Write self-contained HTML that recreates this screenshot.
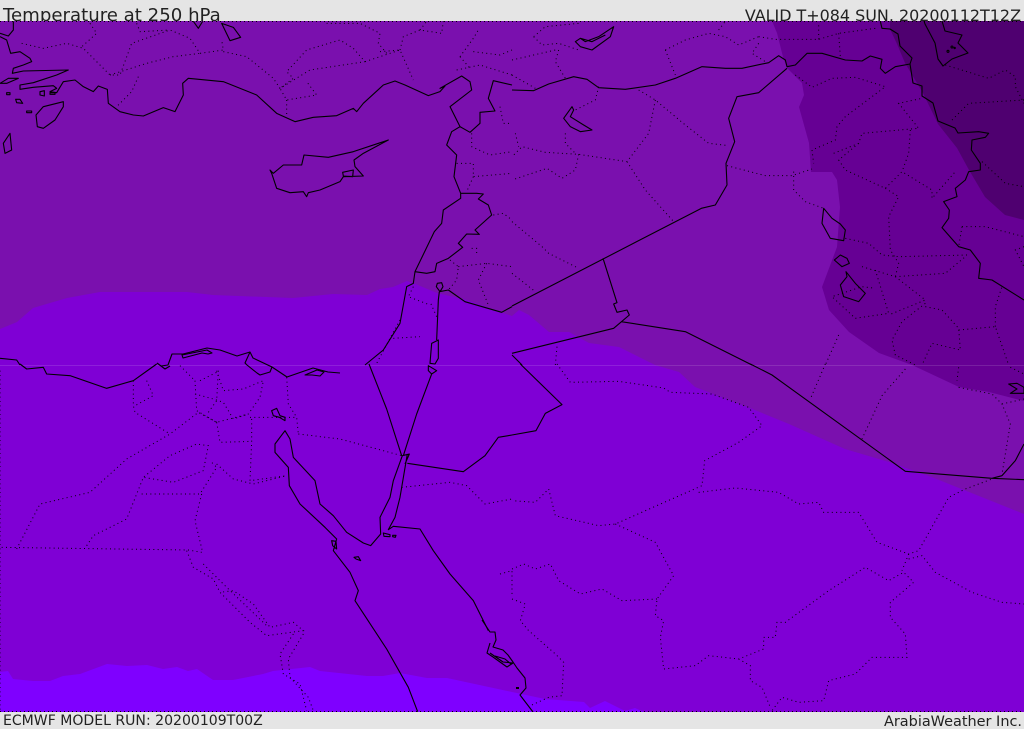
<!DOCTYPE html>
<html><head><meta charset="utf-8"><style>
html,body{margin:0;padding:0;background:#e5e5e5;width:1024px;height:729px;overflow:hidden}
svg{position:absolute;left:0;top:0;display:block}
text{font-family:"DejaVu Sans",sans-serif;fill:#222}
.c{fill:none;stroke:#000;stroke-width:3.3;stroke-linejoin:round}
.d{fill:none;stroke:#000;stroke-width:3;stroke-dasharray:3 10}
.a{fill:none;stroke:#000;stroke-width:1.1;stroke-linejoin:round}
</style></head><body>
<svg width="1024" height="729" viewBox="0 0 1024 729">
<rect width="1024" height="729" fill="#e5e5e5"/>
<text x="3" y="21" font-size="18.15">Temperature at 250 hPa</text>
<text x="1021" y="21" font-size="15.95" text-anchor="end">VALID T+084 SUN, 20200112T12Z</text>
<text x="3" y="725" font-size="14.06">ECMWF MODEL RUN: 20200109T00Z</text>
<text x="1022" y="726" font-size="14.45" text-anchor="end">ArabiaWeather Inc.</text>
<svg x="0" y="21" width="1024" height="691" viewBox="0 21 1024 691">
<rect x="0" y="21" width="1024" height="691" fill="#7a10ae"/>
<path fill="#7f00d5" d="M0,329 17,322 33,308 67,298 100,292 187,292 213,295 293,298 333,294 367,295 380,289 393,287 407,281 413,283 437,293 467,300 500,312 512,316 519,310 529,315 549,332 569,332 589,343 619,347 655,365 679,372 695,387 745,406 789,424 845,449 889,462 929,476 1024,514 1024,712 0,712Z"/>
<path fill="#7f00ff" d="M0,672 8,671 13,679 33,681 50,681 63,676 80,674 107,664 127,666 147,665 163,669 177,667 188,671 197,669 213,680 233,680 263,674 273,671 310,667 320,671 367,676 383,676 400,673 427,678 447,678 512,692 545,699 584,702 590,708 605,701 625,711 635,708 644,712 0,712Z"/>
<path fill="#660094" d="M772,21 777,33 783,57 787,68 802,83 804,95 799,107 809,143 811,172 832,172 837,180 840,207 837,247 822,287 829,310 849,332 879,353 912,365 959,387 989,392 1024,401 1024,21Z"/>
<path fill="#4f0070" d="M890,21 890,29 897,44 905,63 923,93 938,124 957,148 969,170 985,197 1005,215 1024,220 1024,21Z"/>
<rect x="0" y="365" width="1024" height="1" fill="#fff" opacity=".12"/>
<g transform="scale(.33333)">
<path class="d" d="M65,130 130,145 200,130 250,145 330,225 360,225 395,130 510,90 570,115 600,160 670,150 665,120M270,70 290,100 240,145M410,70 420,95 510,90M330,225 440,190 520,170 600,160M415,230 395,275 350,320M670,155 740,170 820,235 840,265 930,210 1095,185 1060,145 1020,120 920,150 860,215 880,235 840,265 860,300 950,285 920,245M860,300 860,350M1095,185 1200,150 1240,240M1200,150 1210,110 1260,90 1325,100 1330,64M1160,160 1135,130 1140,100 1080,70 980,70M1140,155 1200,150M1260,90 1280,64M1370,210 1440,195 1536,225M1380,170 1420,115 1435,90M1420,155 1500,165 1536,150M1380,170 1410,205M1415,400 1415,440 1470,465 1536,455M1370,490 1420,490 1420,530 1536,520M1420,530 1400,575M1500,320 1510,370 1536,370M1480,645 1510,640 1536,660M1415,745 1430,745 1430,760M1350,780 1375,800 1370,840 1345,870M1375,800 1460,790 1536,800M1460,790 1435,840 1465,915M1240,860 1225,890 1290,915M1310,950 1290,905M1180,1015 1260,1010M1200,960 1170,1015 1130,1090"/>
<path class="c" d="M40,64 40,90 25,108 0,100M0,110 20,120 32,160 60,155 90,175 95,185 70,195 40,205 37,220 70,213 205,210 170,225 100,248 60,255 60,268 100,262 160,257 170,265 150,275 170,278 190,245 225,240 250,260 280,275 295,258 322,268 325,310 360,335 400,345 430,348 490,323 525,335 550,285 548,250 565,235 670,245 770,285 830,340 885,365 940,352 1010,347 1060,325 1070,335 1090,310 1150,255 1185,243 1215,255 1285,287 1320,275 1335,258 1320,265 1385,228 1410,245 1415,270 1350,320 1380,380 1355,395 1340,435 1370,465 1362,530 1382,580 1382,595 1330,630 1325,670 1303,695 1245,815 1240,850 1220,860 1200,970 1150,1050 1095,1095M1380,380 1410,397 1440,370 1440,337 1485,333 1465,295 1480,242 1536,255M1382,580 1430,580 1450,582 1435,597 1465,615 1475,645 1425,690 1438,703 1400,702 1375,730 1388,742 1345,775 1310,790 1305,815 1280,820 1245,815M1318,875 1315,900 1310,1020M1290,1090 1295,1030 1315,1020 1315,1075 1305,1092ZM1318,875 1345,870 1395,905 1505,937 1536,920M1309,860 1312,850 1325,848 1329,860 1320,875ZM810,510 820,520 850,495 905,495 912,465 985,472 1060,455 1165,420 1090,460 1062,480 1065,500 1090,528 1030,530 1020,545 960,570 925,578 920,590 910,575 870,578 830,565 815,520ZM1028,517 1060,510 1058,530 1030,528ZM190,305 190,320 165,360 130,385 112,380 108,345 130,320ZM30,400 35,450 15,460 10,430ZM665,70 700,82 722,112 690,122ZM580,64 595,85 608,64M0,250 25,235 55,235 20,250ZM20,278 30,278 30,284 20,284ZM47,298 60,298 68,310 50,308ZM80,333 95,333 95,338 80,338ZM120,275 133,272 133,288 120,285ZM150,278 165,278 165,283 150,283ZM0,1075 50,1080 60,1095"/>
</g>
<g transform="translate(512,0) scale(.33333)">
<path class="d" d="M65,110 100,80 200,70M65,110 90,135 140,130 200,150M140,150 130,185 160,235M0,180 130,150M460,150 520,120 590,100 640,110 680,135 740,110M620,90 640,64M740,110 790,118 920,118 980,100 1090,85M460,150 490,225M740,130 720,160 760,185M920,118 920,70M980,100 985,170M0,225 70,265M260,260 250,300 190,330M380,270 430,300 520,375 590,430 650,437M430,300 410,400 345,485 200,463 100,457 30,440 0,470M345,485 400,570 485,665M200,463 190,510 150,535 105,505 0,540M160,400 160,430 190,460M10,400 20,440M0,665 90,740 110,760 200,805M0,820 70,875M645,497 760,527 840,527 900,507M845,515 845,570 880,605 935,625M1000,715 1070,730 1110,765 1160,770 1370,765M850,225 900,262 960,235 1030,232 1120,260 1000,350 975,380 970,420 900,450 905,490M965,460 1040,430 1050,400 1220,385 1160,310 1230,295M1040,430 980,480 1000,510 1120,565 1170,515 1260,570 1260,595 1330,515M1195,390 1190,460 1170,515M1120,565 1160,590 1130,650 1135,750 1160,790 1150,830M1320,360 1370,310 1536,300M1300,195 1430,235 1480,210 1510,230 1510,260 1536,310M1410,485 1480,550 1536,560M1350,680 1420,680 1536,710M1350,680 1340,740M1536,740 1510,750 1536,800M1050,800 1150,830 1300,820 1360,770M1090,810 1130,940 1030,955 960,890 1050,860 1090,865M1150,830 1240,900 1130,945M1240,910 1170,965 1140,1020 1150,1065 1210,1095M1240,920 1290,930 1340,985 1345,1050 1260,1030 1230,1095M1340,990 1450,980 1490,1095M1450,980 1450,920 1470,860M980,1005 940,1095M135,1040 130,1095"/>
<path class="c" d="M0,270 65,272 110,252 185,230 225,238 260,263 340,268 430,255 490,235 570,200 640,205 690,205 770,188 800,167 820,180 825,200 850,195 885,160 930,160 1000,180 1050,183 1075,168 1110,178 1105,205 1120,220 1150,200 1194,192 1203,249 1230,258 1230,288 1263,309 1278,363 1329,384 1338,399 1400,395 1430,400 1420,412 1380,420 1378,450 1405,490 1405,510 1370,515 1360,540 1330,565 1335,590 1295,605 1312,630 1310,655 1290,683 1340,740 1375,750 1405,790 1400,835 1440,840 1536,900M1105,64 1110,85 1134,87 1158,102 1164,138 1200,174 1194,192M0,918 568,625 610,615 645,555 642,490 668,425 650,355 675,290 740,278 825,205M273,775 315,908 305,912 315,937 345,930 352,945 305,985 0,1060M328,965 520,995 720,1095M0,1065 30,1095M190,125 205,115 220,125 260,110 305,80 295,110 240,150 205,140ZM205,115 240,125 280,105M180,320 155,355 175,380 205,395 240,390 215,375 175,350 185,330ZM935,625 930,670 955,715 995,722 1000,690 985,672 960,655ZM985,765 967,780 990,800 1012,790 1005,775ZM1002,815 1005,830 985,855 995,890 1040,905 1060,880 1030,850Z"/>
<circle class="c" cx="1308" cy="154" r="3"/><circle class="c" cx="1320" cy="141" r="3"/><circle class="c" cx="1328" cy="144" r="2"/>
</g>
<g transform="translate(0,364) scale(.33333)">
<path class="d" d="M5,550 565,558 605,565M0,20V1040M50,555 120,420 270,385 380,285 510,210 595,145 650,175 745,150 780,100 790,50 730,75 670,80 650,20M400,50 400,125 405,145 510,210M440,50 460,95 405,125M585,50 590,140 650,175M585,90 640,105 670,115 700,165 745,150M600,50 650,25M650,175 660,235 755,232M750,160 890,160 895,210M755,165 755,232 750,350 860,335M650,300 700,345 760,360 860,335M540,5 585,50M655,20 650,110 625,145M860,40 865,120 890,160M895,210 1020,225 1205,275M260,545 280,515 380,465 430,340 520,355 610,320 625,245 590,240 510,275 430,340M425,390 600,390 650,310 630,290M605,390 585,470 608,565M560,560 580,610 640,645 660,685 750,775 800,815 910,800 880,775 810,790 760,720 700,680 660,685M610,600 680,670 800,785M880,810 840,870 850,930 900,960 920,1040M910,810 865,885 870,940 925,1000 940,1040M1205,370 1350,355 1400,365 1455,420 1536,405M1500,630 1536,620 1536,690"/>
<path class="c" d="M60,0 80,15 130,10 140,30 210,35 320,73 400,50 470,0M1107,0 1160,135 1205,275M1295,30 1250,150 1210,275M1285,5 1310,20 1295,30 1285,20ZM1222,270 1200,400 1185,460 1165,497 1180,487 1260,495 1300,560 1350,630 1420,710 1465,800M1207,275 1180,350 1170,400 1140,460 1142,510 1112,545 1090,537 1040,505 1000,455 960,420 945,350 880,280 870,225 855,200 825,240 825,265 865,310 868,365 900,420 975,490 1010,525 1000,560 1050,625 1075,680 1065,710 1160,855 1225,970 1253,1043M1222,298 1390,323 1455,275 1495,220 1536,213M1207,275 1228,270 1215,300M815,140 830,133 840,155 855,160 855,170 838,160 820,155ZM1062,580 1075,578 1082,590 1068,585ZM1150,507 1170,512 1170,518 1152,517ZM1178,514 1188,514 1186,520 1178,518ZM995,530 1008,532 1010,555 998,545Z"/>
</g>
<g transform="translate(512,364) scale(.33333)">
<path class="d" d="M135,0 175,55 320,52 455,72 475,85 600,90 710,130 750,185 680,235 578,290 570,365 310,480 260,485 130,455 110,375 70,415 0,410M560,385 670,372 800,385 860,420 920,415 935,445 1040,445 1095,535 1190,570 1220,560 1310,400 1360,375 1440,345M310,480 430,535 485,635 435,705 430,755 455,770 445,820 455,915 550,905 590,875 680,885 755,855 755,820 790,820 795,775 820,775 950,680 1060,610 1130,650 1175,625 1205,655 1135,715 1135,760 1180,810 1185,880 1080,880 1030,930 950,950 935,1010 860,1015 810,1000 780,1040M680,885 715,905 715,950 750,970 775,1030M0,615 35,600 70,615 115,600 140,650 205,690 270,675 330,710 435,705M0,705 40,720 25,770 50,800 130,870 155,895 150,995 110,1000 55,1025M1190,570 1170,620M1190,585 1230,575 1270,625 1380,685 1470,715 1536,720M940,0 895,105M1180,15 1110,95 1050,225M1340,70 1440,90 1470,120 1495,180 1470,330M1470,120 1536,105M1340,10 1335,50M1495,10 1536,30"/>
<path class="c" d="M25,0 150,122 100,148 72,200 0,213M715,0 780,33 1180,322 1440,343 1536,347M1440,343 1470,335 1510,290 1536,240M1490,60 1515,58 1536,70 1536,88 1495,88 1515,75Z"/>
</g>
<path class="a" d="M157,363 161,366 168,365 172,354 183,354 207,348 220,350 237,356 250,352 253,358 272,367 287,377 313,368 328,372 340,373"/>
<path class="a" d="M182,355 207,350 212,353 208,354 202,353 183,358ZM250,352 245,363 247,365 257,373 260,375 270,372 272,367M161,366 165,369 170,366M305,375 317,370 324,372 320,376 312,375Z"/>
<path class="a" d="M482,620 490,632 495,632 496,640 493,647 503,650 508,655 513,662 517,668 525,678 526,688 520,695 533,712M490,643 487,653 493,657 507,667 513,663 503,662 490,653M495,656 505,659 511,664"/>
<path fill="#000" d="M516,687h3v2h-3z"/>
<path class="a" d="M924,21 925,24 935,43 938,59 943,66 952,59 968,53 958,43 962,35 945,31 942,21"/>
<path d="M0,21.5H1024M0,711.5H1024" stroke="#000" stroke-width="1" stroke-dasharray="1 3"/>
</svg>
</svg>
</body></html>
